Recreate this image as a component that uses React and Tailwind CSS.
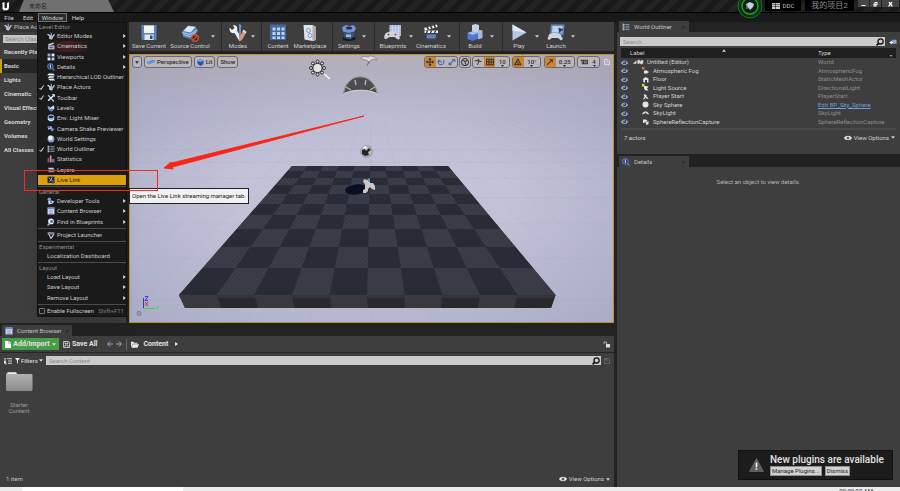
import React from "react";
import clsx from "clsx";

const icons = {
  tools: (
    <>
      <path d="M1 4l5 3-1 5" stroke="#dfe5ee" strokeWidth="2.4" fill="none" />
      <path d="M7 1l1 5-1 6" stroke="#7fa6dc" strokeWidth="2" fill="none" />
      <path d="M13 4l-6 8" stroke="#e3b796" strokeWidth="2.4" />
      <path d="M3 8h8l-2 5H6z" fill="#aebbd0" />
    </>
  ),
  clapper: (
    <>
      <path d="M2 4l9-3 1 2-9 3z" fill="#f0e4e6" />
      <rect x="2" y="6" width="11" height="7" fill="#b9bedb" />
      <rect x="4" y="8" width="7" height="3" fill="#5a6791" />
    </>
  ),
  panes: (
    <>
      <path d="M1 1h5v5H1z" fill="#8fb0dd" />
      <path d="M8 1h5v5H8z" fill="#e6eefb" />
      <path d="M1 8h5v5H1z" fill="#e6eefb" />
      <path d="M8 8h5v5H8z" fill="#b9cfee" />
    </>
  ),
  lens: (
    <>
      <circle cx="6" cy="6" r="5" fill="#27406f" stroke="#6d92cf" strokeWidth="1.4" />
      <path d="M6 4v5M5 5h1M6 2v1" stroke="#dce6f5" strokeWidth="1.6" />
      <path d="M10 10l3 3" stroke="#5b89d4" strokeWidth="2.4" />
    </>
  ),
  stack: (
    <>
      <path d="M3 1h8l3 3H0z" fill="#f1f1f1" />
      <path d="M4 5h9l-2 4H1z" fill="#c2c5c9" />
      <path d="M2 10h10l2 3H5z" fill="#ededed" />
    </>
  ),
  wrench: (
    <>
      <path d="M2 2l10 11" stroke="#a6c6ec" strokeWidth="2.4" />
      <path d="M12 2L2 12" stroke="#f4f6f8" strokeWidth="2.4" />
      <path d="M9 1h4v4" stroke="#f4f6f8" strokeWidth="1.5" fill="none" />
    </>
  ),
  levels: (
    <>
      <path d="M1 3l4 2 2 6-5-2z" fill="#78a2e0" />
      <path d="M6 6l6-4 1 6-5 5-4-2z" fill="#cfe0fa" />
      <path d="M4 10l5-2 3 1-4 4z" fill="#4b78c0" />
    </>
  ),
  globe: (
    <>
      <circle cx="7" cy="7" r="6" fill="#7aaddb" />
      <ellipse cx="7" cy="5" rx="5" ry="3" fill="#17222f" stroke="#d6e7f7" />
      <path d="M2 9c3 3 7 3 10 0" stroke="#e2f2ff" strokeWidth="2" fill="none" />
    </>
  ),
  shake: (
    <>
      <path d="M1 3l7-1 1 5-7 1z" fill="#b7cdf1" />
      <path d="M8 5l5 2-4 5-2-3z" fill="#7089c7" />
      <circle cx="4" cy="4" r="2" fill="#4e6ba8" />
    </>
  ),
  sphere: (
    <>
      <circle cx="7" cy="7" r="6" fill="#8aa1cf" />
      <circle cx="6" cy="5" r="4" fill="#eef2fb" />
    </>
  ),
  outliner: (
    <>
      <path d="M2 1v12M2 3h3M2 7h3M2 11h3" stroke="#e2e8f2" strokeWidth="1.3" />
      <path d="M6 2h7v2H6zM6 6h7v2H6zM6 10h7v2H6z" fill="#90a9cf" />
    </>
  ),
  bars: (
    <>
      <path d="M1 5h3v8H1z" fill="#b34a68" />
      <path d="M5 1h3v12H5z" fill="#d38b9d" />
      <path d="M9 7h4v6H9z" fill="#6c77b5" />
    </>
  ),
  layers: (
    <>
      <path d="M2 3h9l2 3H3z" fill="#c6d0e7" />
      <path d="M1 7h11l1 4H3z" fill="#7386b5" />
    </>
  ),
  live: (
    <>
      <rect x="1" y="1" width="12" height="11" fill="#1b2130" />
      <path d="M3 3l3 3M9 2l-2 5M4 9l4-2 4 4" stroke="#c7d4e6" strokeWidth="1.4" fill="none" />
      <path d="M8 8h5v5H8z" fill="#324e7b" />
    </>
  ),
  dev: (
    <>
      <circle cx="4" cy="4" r="3" fill="#7ea3da" />
      <path d="M2 7l6-1 5 2-4 4-6 1z" fill="#d4dded" />
      <circle cx="7" cy="9" r="1.5" fill="#33405a" />
    </>
  ),
  browser: (
    <>
      <rect x="1" y="1" width="12" height="12" fill="#d9e3fb" />
      <path d="M1 1h12v3H1zM3 6h8v2H3zM3 10h8v2H3z" fill="#6f87c6" />
    </>
  ),
  find: (
    <>
      <circle cx="7" cy="6" r="5" fill="#e7ecf5" />
      <circle cx="8" cy="6" r="2.6" fill="#4c6ea8" />
      <path d="M5 9l-4 4" stroke="#a1b8df" strokeWidth="2.4" />
    </>
  ),
  launcher: (
    <>
      <path d="M1 2h12v4H1z" fill="#7d8bb8" />
      <path d="M3 5l4 8 5-7" stroke="#c2cbe5" strokeWidth="2" fill="none" />
      <circle cx="4" cy="4" r="1.5" fill="#d6677a" />
    </>
  ),
  eye: (
    <>
      <path d="M0 8c3-7 11-7 14 0-3 5-11 5-14 0z" fill="#a9bbe6" />
      <circle cx="7" cy="7" r="3.6" fill="#27365f" />
      <circle cx="6" cy="6" r="1.5" fill="#e9efff" />
    </>
  ),
};

function Icon({ name, className = "size-2" }) {
  return (
    <svg viewBox="0 0 14 14" className={clsx("shrink-0", className)} aria-hidden="true">
      {icons[name]}
    </svg>
  );
}

function Caret({ className = "w-1 h-[3px]" }) {
  return (
    <svg viewBox="0 0 8 5" className={clsx("shrink-0 fill-current", className)} aria-hidden="true">
      <path d="M0 0h8L4 5z" />
    </svg>
  );
}

function SearchGlyph() {
  return (
    <svg viewBox="0 0 14 14" className="size-2 shrink-0" fill="none" stroke="#111" strokeWidth="2.2">
      <circle cx="8" cy="6" r="4.5" />
      <path d="M5 9l-4 4" strokeWidth="3" />
    </svg>
  );
}

function Tab({ icon, label }) {
  return (
    <div className="flex h-[11px] w-[70px] items-center gap-1 bg-[#3e3e3e] px-[3px] text-[#c4c4c4]">
      <Icon name={icon} />
      <span className="grow whitespace-nowrap">{label}</span>
      <button aria-label={"Close " + label} className="mr-px text-[6px] leading-none text-[#1c1c1c]">×</button>
    </div>
  );
}

function ViewOptions() {
  return (
    <button className="flex items-center gap-[2px] text-[#d0d0d0]">
      <svg viewBox="0 0 16 10" className="h-[6px] w-2">
        <path d="M0 5c4-6 12-6 16 0-4 6-12 6-16 0z" fill="#f0f0f0" />
        <circle cx="8" cy="5" r="3" fill="#50607c" />
      </svg>
      View Options
      <Caret />
    </button>
  );
}

/* ---------- title and menu bar ---------- */

function TitleBar() {
  return (
    <header className="relative flex h-3 shrink-0 items-start bg-[repeating-linear-gradient(135deg,#191919_0px,#191919_6px,#232323_6px,#232323_12px)]">
      <svg viewBox="0 0 20 20" className="ml-[1px] h-3 w-[10px]">
        <path d="M2 4c3-1 4-2 5-2v10c0 3 4 3 5 1V4l5-2c-1 1-1 2-1 3v8c0 3-2 5-5 6l-2-1-2 1c-3-1-4-3-4-5V6z" fill="#f5f5f5" />
      </svg>
      <div className="ml-2 flex h-3 w-[95px] items-center bg-[#707070] pl-[10px] [clip-path:polygon(5%_0,94%_0,100%_100%,0_100%)]">
        <span className="text-[6px] text-[#262626]">未命名</span>
      </div>
      <div className="grow" />
      <svg viewBox="0 0 28 22" className="mr-px h-[22px] w-7 self-start overflow-visible">
        <circle cx="14" cy="6" r="12" fill="#0e3c12" fillOpacity=".75" stroke="#1c6f22" strokeWidth="1" />
        <circle cx="14" cy="6" r="8" fill="#101d12" stroke="#22a32c" strokeWidth="1.4" />
        <path d="M10 4l4-2 4 2-1 3-3 3-3-4z" fill="#b8d5ee" />
        <path d="M11 4v5" stroke="#d3a15a" />
      </svg>
      <div className="mr-1 flex h-[11px] w-9 items-center justify-center gap-[3px] bg-black text-[#c5c5c5]">
        <svg viewBox="0 0 16 12" className="h-[6px] w-2" fill="#cfcfcf">
          <path d="M0 0h7v3H0zM8 0h8v3H8zM0 4h7v3H0zM8 4h8v3H8zM0 8h7v4H0zM8 8h8v4H8z" />
        </svg>
        DDC
      </div>
      <div className="mr-1 h-[11px] w-[49px] bg-black text-center text-[8px] leading-[11px] text-[#8f8f8f]">我的项目2</div>
      <div className="mr-px flex h-[7px] w-[41px] divide-x divide-[#222] bg-[#454545] text-white">
        {["M3 8h8v2H3z", "M5 2h6v6H9v3H3V5h2zM7 4v2h2V4zM5 7v2h2V7z", "M3 2h3l1 2 1-2h3L9 6l3 5H9L7 8l-2 3H2l3-5z"].map((d, i) => (
          <button key={d} aria-label={["Minimize", "Restore", "Close"][i]} className={clsx("flex items-center justify-center", i === 2 ? "grow" : "w-3")}>
            <svg viewBox="0 0 14 12" className="h-[6px] w-[7px] fill-current" fillRule="evenodd"><path d={d} /></svg>
          </button>
        ))}
      </div>
    </header>
  );
}

function MenuBar() {
  return (
    <nav className="flex h-[10px] shrink-0 items-center border-t border-black bg-[#191919] text-[#d4d4d4]">
      <button className="w-[18px]">File</button>
      <button className="w-5">Edit</button>
      <button className="h-[9px] w-[29px] border border-[#777] bg-[#2a2a2a] leading-[7px]">Window</button>
      <button className="w-[22px]">Help</button>
    </nav>
  );
}

/* ---------- window menu ---------- */

const levelEditor = [
  { label: "Editor Modes", icon: "tools", sub: true },
  { label: "Cinematics", icon: "clapper", sub: true, glow: true },
  { label: "Viewports", icon: "panes", sub: true },
  { label: "Details", icon: "lens", sub: true },
  { label: "Hierarchical LOD Outliner", icon: "stack" },
  { label: "Place Actors", icon: "tools", checked: true },
  { label: "Toolbar", icon: "wrench", checked: true },
  { label: "Levels", icon: "levels" },
  { label: "Env. Light Mixer", icon: "globe" },
  { label: "Camera Shake Previewer", icon: "shake" },
  { label: "World Settings", icon: "sphere" },
  { label: "World Outliner", icon: "outliner", checked: true },
  { label: "Statistics", icon: "bars" },
  { label: "Layers", icon: "layers" },
  { label: "Live Link", icon: "live", active: true },
];

const general = [
  { label: "Developer Tools", icon: "dev", sub: true },
  { label: "Content Browser", icon: "browser", sub: true },
  { label: "Find in Blueprints", icon: "find", sub: true },
];

const layouts = [
  { label: "Load Layout", sub: true },
  { label: "Save Layout", sub: true },
  { label: "Remove Layout", sub: true },
];

function MenuItem({ label, icon, sub, checked, active, glow }) {
  return (
    <button
      role="menuitem"
      className={clsx(
        "flex w-full items-center text-left",
        active ? "bg-[#dda00d] text-[#2a1d00]" : "text-[#c9c9c9]",
        glow && "bg-[radial-gradient(circle_at_35%_50%,#4b2020_0px,#1a1a1a_22px)]"
      )}
    >
      <span className="w-[9px] shrink-0">
        {checked && (
          <svg viewBox="0 0 10 10" className="ml-px size-[5px]" fill="none" stroke="#eee" strokeWidth="2">
            <path d="M1 6l3 3 5-8" />
          </svg>
        )}
      </span>
      {icon && <Icon name={icon} className="mr-[2px] size-2" />}
      <span className="grow whitespace-nowrap">{label}</span>
      {sub && (
        <svg viewBox="0 0 4 6" className="h-1 w-[3px] shrink-0 fill-[#ddd]"><path d="M0 0l4 3-4 3z" /></svg>
      )}
    </button>
  );
}

function MenuGroup({ title, items, rows }) {
  return (
    <section>
      {title && <h3 className="h-2 pl-px leading-2 text-[#8e8e8e]">{title}</h3>}
      <div className={clsx("grid auto-rows-fr", rows)}>
        {items.map((item) => <MenuItem key={item.label} {...item} />)}
      </div>
    </section>
  );
}

function WindowMenu() {
  const rule = <hr className="my-px h-px border-0 bg-[#4c4c4c]" />;
  return (
    <div role="menu" className="absolute top-[22px] left-[37px] z-20 w-[90px] border border-[#101010] bg-[#1a1a1a] shadow-lg">
      <MenuGroup title="Level Editor" items={levelEditor} rows="h-[154px]" />
      {rule}
      <MenuGroup title="General" items={general} rows="h-[31px]" />
      {rule}
      <MenuGroup items={[{ label: "Project Launcher", icon: "launcher" }]} rows="h-[10px]" />
      {rule}
      <MenuGroup title="Experimental" items={[{ label: "Localization Dashboard" }]} rows="h-[10px]" />
      {rule}
      <MenuGroup title="Layout" items={layouts} rows="h-[31px]" />
      {rule}
      <label className="flex h-[10px] items-center text-[#c9c9c9]">
        <input type="checkbox" className="mr-[2px] ml-[1px] size-[6px] appearance-none rounded-[1px] border border-[#777]" />
        <span className="grow">Enable Fullscreen</span>
        <span className="pr-[2px] text-[#7d7d7d]">Shift+F11</span>
      </label>
    </div>
  );
}

/* ---------- place actors ---------- */

const categories = ["Recently Placed", "Basic", "Lights", "Cinematic", "Visual Effects", "Geometry", "Volumes", "All Classes"];

function PlaceActors() {
  return (
    <aside className="w-[126px] shrink-0 bg-[#3e3e3e]">
      <div className="flex h-[10px] items-center gap-[2px] bg-[#333] pl-1 text-[#c4c4c4]">
        <Icon name="tools" />
        Place Actors
      </div>
      <input aria-label="Search classes" placeholder="Search Classes" className="mx-[3px] mt-[3px] mb-[2px] block h-2 w-[118px] bg-[#c4c4c4] pl-[2px] text-[6px] placeholder:text-[#858585]" />
      {categories.map((c) => (
        <button
          key={c}
          className={clsx(
            "block h-[14px] w-full border-l-2 pl-[2px] text-left font-bold text-[#d2d2d2]",
            c === "Basic" ? "border-[#d39a12] bg-[#262626]" : "border-transparent"
          )}
        >
          {c}
        </button>
      ))}
    </aside>
  );
}

/* ---------- main toolbar ---------- */

const art = {
  save: (
    <>
      <path d="M3 3h30v30H5l-2-2z" fill="#5b82c0" />
      <path d="M8 4h20v15H8z" fill="#f1f5fb" />
      <path d="M9 22h18v11H9z" fill="#dfe5ee" />
      <path d="M20 24h5v7h-5z" fill="#304b7c" />
    </>
  ),
  source: (
    <>
      <path d="M1 17l13-13 15 2 5 9-15 16-14-4z" fill="#5a83bd" />
      <path d="M5 15l9-10 15 2-10 11z" fill="#dbe7f4" />
      <path d="M3 18l15 4 14-9M5 22l13 4 12-9" stroke="#b7cceb" strokeWidth="2" fill="none" />
      <circle cx="28" cy="29" r="6.5" fill="#3c2420" stroke="#d5532d" strokeWidth="2.6" />
      <path d="M24 33l8-8" stroke="#d5532d" strokeWidth="2.6" />
    </>
  ),
  modes: (
    <>
      <path d="M1 8l5 5 5-4-3-6c8 0 10 6 8 11l9 15-5 5-9-15C5 21 0 16 1 8z" fill="#eef0f3" />
      <path d="M20 1c5 0 6 5 4 9v18h-4V12z" fill="#5f92cd" />
      <path d="M29 12l6 5-9 16-6 3v-6z" fill="#d79a74" />
      <path d="M29 12l6 5-2 3-6-4z" fill="#f1d5c2" />
    </>
  ),
  content: (
    <>
      <rect x="2" y="2" width="32" height="31" rx="2" fill="#46689f" />
      <path d="M7 8h6v6H7zM16 8h6v6h-6zM25 8h6v6h-6zM7 17h6v6H7zM16 17h6v6h-6zM25 17h6v6h-6zM7 26h6v5H7zM16 26h6v5h-6zM25 26h6v5h-6z" fill="#bcd3f4" />
    </>
  ),
  market: (
    <>
      <path d="M5 3h18l7 4v26l-7 2L7 32z" fill="#dfe4ec" />
      <path d="M23 3l7 4v26l-7 2z" fill="#b5a8a4" />
      <circle cx="15" cy="14" r="4" fill="none" stroke="#6b9bcf" strokeWidth="2" />
      <circle cx="18" cy="24" r="4" fill="none" stroke="#6b9bcf" strokeWidth="2" />
    </>
  ),
  settings: (
    <>
      <ellipse cx="18" cy="30" rx="13" ry="5" fill="#151515" />
      <path d="M4 8l7-5 8 2 8-2 5 6-3 7-11 3-12-3z" fill="#7194d6" />
      <ellipse cx="18" cy="9" rx="6" ry="3" fill="#26314a" />
      <path d="M8 18l10 2 10-2v8l-7 6-12-3z" fill="#3d5583" />
      <path d="M12 22h10v5H12z" fill="#a0b8e4" />
    </>
  ),
  blueprints: (
    <>
      <path d="M11 3h23v22H11z" fill="#a9b8e6" />
      <path d="M17 3v20M23 3v20M29 3v20M11 9h22M11 15h22" stroke="#e0e6fb" strokeWidth="1.2" />
      <path d="M3 20c4-5 20-5 25 0 4 4 5 11 1 12-4 0-6-5-8-5H12c-3 0-6 5-10 4-3-2-1-8 1-11z" fill="#d5d4d3" />
      <circle cx="9" cy="22" r="2" fill="#5a5a5a" />
      <circle cx="23" cy="22" r="2" fill="#5a5a5a" />
    </>
  ),
  cine: (
    <>
      <path d="M4 9l26-7 1 5L6 14z" fill="#f0f0f0" />
      <path d="M10 7l3 5M17 5l3 5M24 3l3 5" stroke="#333" strokeWidth="3" />
      <path d="M5 14h27v5H5z" fill="#ececec" />
      <path d="M11 14l-2 5M19 14l-2 5M27 14l-2 5" stroke="#333" strokeWidth="2.6" />
      <path d="M5 19h27l-2 15H7z" fill="#35435c" />
      <path d="M9 22h19l-1 8H10z" fill="#6b84ad" />
    </>
  ),
  build: (
    <>
      <path d="M12 3l7-2 7 2v24H12z" fill="#c6d2ea" />
      <path d="M24 12l9 2v15l-9 3z" fill="#a4b8de" />
      <path d="M3 19l9-3 12 3v11l-11 5-10-4z" fill="#4f78cc" />
      <path d="M3 19l9-3 12 3-11 4z" fill="#a0bff0" />
    </>
  ),
  play: (
    <>
      <path d="M5 2l28 16L5 34z" fill="#b5c6e6" />
      <path d="M5 2l28 16-28-3z" fill="#dbe6f7" />
    </>
  ),
  launch: (
    <>
      <path d="M8 2h27l-2 21H6z" fill="#6789b8" />
      <path d="M11 5h20l-1 13H10z" fill="#b8d3ee" />
      <path d="M23 8l10 4-9 7z" fill="#2e3a52" />
      <path d="M4 22c4-4 19-4 23 0l5 9-4 3-6-5H10l-6 4-3-2z" fill="#d0d3d9" />
    </>
  ),
};

const toolGroups = [
  [
    { label: "Save Current", art: "save", w: "w-[40px]" },
    { label: "Source Control", art: "source", w: "w-[42px]", arrow: "w-[10px]" },
  ],
  [{ label: "Modes", art: "modes", w: "w-[26px]", arrow: "w-[10px]", pad: "ml-[3px]" }],
  [
    { label: "Content", art: "content", w: "w-[32px]" },
    { label: "Marketplace", art: "market", w: "w-[32px]", pad: "mr-[6px]" },
  ],
  [{ label: "Settings", art: "settings", w: "w-[26px]", arrow: "w-[12px]", pad: "ml-[3px]" }],
  [
    { label: "Blueprints", art: "blueprints", w: "w-[32px]", arrow: "w-[6px]", pad: "ml-[2px]" },
    { label: "Cinematics", art: "cine", w: "w-[32px]", arrow: "w-[12px]" },
  ],
  [{ label: "Build", art: "build", w: "w-[30px]", arrow: "w-[12px]" }],
  [
    { label: "Play", art: "play", w: "w-[32px]", arrow: "w-[6px]" },
    { label: "Launch", art: "launch", w: "w-[30px]", arrow: "w-[12px]" },
  ],
];

function Toolbar() {
  return (
    <div className="flex h-[29px] bg-[#3e3e3e] text-[#cfcfcf]">
      {toolGroups.map((group, i) => (
        <div key={i} className={clsx("flex", i < toolGroups.length - 1 && "border-r border-[#282828]")}>
          {group.map((t) => (
            <div key={t.label} className={clsx("flex", t.pad)}>
              <button className={clsx("flex flex-col items-center whitespace-nowrap", t.w)}>
                <svg viewBox="0 0 36 36" className="mt-px h-[19px] w-[18px] shrink-0">{art[t.art]}</svg>
                <span className="leading-2">{t.label}</span>
              </button>
              {t.arrow && (
                <button aria-label={t.label + " options"} className={clsx("flex items-center", t.arrow)}><Caret /></button>
              )}
            </div>
          ))}
        </div>
      ))}
    </div>
  );
}

/* ---------- viewport ---------- */

const rowEdges = [166, 171, 178, 185, 194, 204, 215, 229, 247, 268, 295];

function edgeX(col, y) {
  const t = (y - 166) / 129;
  const left = 292 - 113 * t;
  const right = 448 + 107.5 * t;
  return left + ((right - left) * col) / 10;
}

function Floor() {
  const tiles = [];
  for (let r = 0; r < 10; r++) {
    for (let c = 0; c < 10; c++) {
      const y0 = rowEdges[r];
      const y1 = rowEdges[r + 1];
      const light = (r + c) % 2 === 0;
      const points = `${edgeX(c, y0)},${y0} ${edgeX(c + 1, y0)},${y0} ${edgeX(c + 1, y1)},${y1} ${edgeX(c, y1)},${y1}`;
      tiles.push(<polygon key={r + "-" + c} points={points} fill={light ? "url(#weave)" : "#292b36"} />);
    }
  }
  const front = [];
  for (let c = 0; c < 10; c++) {
    const a = 179 + c * 37.65;
    const b = 185 + c * 36.6;
    front.push(
      <polygon key={c} points={`${a},295 ${a + 37.65},295 ${b + 36.6},308 ${b},308`} fill={c % 2 ? "#29292c" : "#39393c"} />
    );
  }
  return (
    <g>
      <polygon points="292,166 448,166 555.5,295 551,308 185,308 179,295" fill="#2b2d37" />
      {tiles}
      {front}
      <path d="M179 295h376.5l-1 3H180z" fill="#3b3c42" fillOpacity=".6" />
    </g>
  );
}

function Scene() {
  const rays = [];
  for (let i = -24; i <= 24; i++) rays.push(<path key={i} d={`M${371 + i * 12} 116L${371 + i * 62} 323`} />);
  return (
    <svg viewBox="130 55 483 267" preserveAspectRatio="xMidYMid slice" className="absolute inset-0 size-full">
      <defs>
        <linearGradient id="sky" x1="0" y1="0" x2="0" y2="1">
          <stop offset="0" stopColor="#c2bbbf" />
          <stop offset=".06" stopColor="#bcb8c2" />
          <stop offset=".16" stopColor="#b9bacf" />
          <stop offset=".45" stopColor="#c2c3d8" />
          <stop offset="1" stopColor="#c0c1d8" />
        </linearGradient>
        <radialGradient id="vignette" cx=".5" cy=".52" r=".7">
          <stop offset=".4" stopColor="#8486a6" stopOpacity="0" />
          <stop offset="1" stopColor="#8486a6" stopOpacity=".38" />
        </radialGradient>
        <pattern id="weave" width="4" height="4" patternUnits="userSpaceOnUse">
          <rect width="4" height="4" fill="#3b3d49" />
          <path d="M0 0h2v2H0zM2 2h2v2H2z" fill="#373944" />
        </pattern>
      </defs>
      <rect x="130" y="55" width="483" height="267" fill="url(#sky)" />
      <g stroke="#a5a8c4" strokeWidth=".6" strokeOpacity=".25" fill="none">
        {rays}
        <path d="M130 150h483M130 162h483M130 178h483M130 198h483M130 224h483M130 258h483M130 300h483" />
      </g>
      <rect x="130" y="55" width="483" height="267" fill="url(#vignette)" />
      <Floor />

      {/* sun */}
      <g>
        <path d="M322 72l8 7" stroke="#f3f1f4" strokeWidth="1.6" />
        <g fill="#ddd" stroke="#2b2b2b" strokeWidth="1">
          {[0, 45, 90, 135, 180, 225, 270, 315].map((a) => (
            <circle key={a} cx={317.5 + 6.5 * Math.cos((a * Math.PI) / 180)} cy={68 + 6.5 * Math.sin((a * Math.PI) / 180)} r="1.5" />
          ))}
          <circle cx="317.5" cy="68" r="4.6" fill="#e7e4e2" />
        </g>
      </g>
      {/* sky light dome */}
      <path d="M343.500 94c2-23 31-23 34 0-8-5-26-5-34 0z" fill="#4c4c4e" stroke="#d6d6d8" strokeWidth="1.2" />
      <path d="M343.500 94c2-23 31-23 34 0" fill="none" stroke="#3c3c3e" strokeWidth=".5" />
      <path d="M346 87l5 3M355 80l1 5M366 80l-1 5M375 87l-5 3" stroke="#b9b9bb" strokeWidth="1.3" />
      {/* fog sprite */}
      <path d="M361 59c1-3 4-3 6-2l3-1c3 0 6 1 7 4l-4-1-3 2-1 3-1-3-3-1z" fill="#dcdadc" stroke="#77757a" strokeWidth=".7" />
      <path d="M369 61l-2 5" stroke="#77757a" strokeWidth="1" />
      {/* reflection capture */}
      <circle cx="366.500" cy="151.500" r="5.800" fill="#b9b9bc" stroke="#77777c" strokeWidth=".6" />
      <path d="M362 150l3-1 1 2 3-3 2 2-3 2 1 3-4 1-3-2z" fill="#242424" />
      <path d="M363 147l3-1 1 2-3 1z" fill="#fff" />
      {/* player start */}
      <ellipse cx="356" cy="189.500" rx="11" ry="5" fill="#0a0e22" transform="rotate(-8 356 189.500)" />
      <path d="M364 179l3 1 3-1v4h3l2 3v4l-3-1-2-2-2 2v2l-2 2h-3v-3l2-1v-5l-2-2z" fill="#c9c8c6" />
      <path d="M369 178v4" stroke="#4a8fc4" strokeWidth="1.5" />
      {/* axis gizmo */}
      <path d="M143.500 298v10" stroke="#3738b8" />
      <path d="M143 308.500h12" stroke="#3fd05a" />
      <path d="M145 296.500h3l-3 4h3" stroke="#3838ea" fill="none" />
      <path d="M145 302l3 4M148 302l-3 4" stroke="#e22e2e" />
      <path d="M156 306l1.500 2 1.500-2M157.500 308v2" stroke="#3fe05a" fill="none" />
      <circle cx="139" cy="313.500" r="2" fill="#9b9eb4" stroke="#6b6e84" strokeWidth=".8" />

      <path d="M364 116L171.500 163l-.5-1-7 6 9 1-.6-2z" fill="#fb2416" stroke="#fb2416" strokeWidth=".9" />
    </svg>
  );
}

const chip = "flex h-[12px] items-center overflow-hidden rounded-[3px] border border-[#6b696d] bg-[#b9b7bb] text-[#2c2c2c]";

function SnapValue({ children, w }) {
  return (
    <button className={clsx("flex h-full flex-col items-center justify-center font-medium leading-[7px]", w)}>
      {children}
      <Caret className="h-[2px] w-[3px]" />
    </button>
  );
}

function ToolGlyph({ d, on, w = "w-[11px]", color = "#333", label }) {
  return (
    <button aria-label={label} className={clsx("flex h-full items-center justify-center", w, on && "bg-[#ce8530]")}>
      <svg viewBox="0 0 14 14" className="size-2" fill="none" stroke={color} strokeWidth="1.8"><path d={d} /></svg>
    </button>
  );
}

function ViewportBar() {
  return (
    <div className="relative flex items-center px-[2px] pt-px">
      <div className="flex gap-[2px]">
        <button aria-label="Viewport options" className={clsx(chip, "w-[10px] justify-center")}><Caret /></button>
        <button className={clsx(chip, "gap-[2px] px-[2px] font-medium")}>
          <svg viewBox="0 0 16 10" className="h-[6px] w-2"><path d="M0 4l6-1 5-3 5 2v4l-6 1-5 3-5-2z" fill="#5e95df" /></svg>
          Perspective
        </button>
        <button className={clsx(chip, "gap-[2px] px-[2px] font-medium")}>
          <svg viewBox="0 0 14 14" className="size-[7px]"><path d="M7 0l6 3v7l-6 4-6-4V3z" fill="#2a55b8" /><path d="M7 0l6 3-6 3-6-3z" fill="#7ba3ea" /></svg>
          Lit
        </button>
        <button className={clsx(chip, "px-[2px] font-medium")}>Show</button>
      </div>
      <div className="grow" />
      <div className="flex items-center gap-px">
        <div className={clsx(chip, "w-[34px]")}>
          <ToolGlyph label="Move" on d="M7 1v12M1 7h12M5 3l2-2 2 2M5 11l2 2 2-2M3 5L1 7l2 2M11 5l2 2-2 2" />
          <ToolGlyph label="Rotate" color="#3f62a3" d="M3 3c-3 4 0 9 4 9s7-5 4-9M5 3v3H2M6 7h3" />
          <ToolGlyph label="Scale" color="#3f62a3" d="M2 12l9-9M7 3h5v4M2 8v4h4" />
        </div>
        <div className={clsx(chip, "w-[12px] justify-center")}>
          <ToolGlyph label="Coordinate space" d="M7 1a6 6 0 100 12A6 6 0 007 1M3 4l4 2 1 5M7 6l4-2" />
        </div>
        <div className={clsx(chip, "w-[38px]")}>
          <ToolGlyph label="Surface snapping" d="M1 5h8l-2-3M9 5L6 12M10 6h3" />
          <ToolGlyph label="Grid snapping" on w="w-[12px]" d="M1 2h12v10H1zM1 7h12M5 2v10M9 2v10" />
          <SnapValue w="w-[14px]">10</SnapValue>
        </div>
        <div className={clsx(chip, "ml-px w-[29px]")}>
          <ToolGlyph label="Rotation snapping" on d="M1 12L7 2l5 10zM8 12c0-3-2-4-4-5" />
          <SnapValue w="w-[17px]">10°</SnapValue>
        </div>
        <div className={clsx(chip, "ml-[2px] w-[31px]")}>
          <ToolGlyph label="Scale snapping" on d="M2 12l9-9M6 3h5v5" />
          <SnapValue w="w-[19px]">0.25</SnapValue>
        </div>
        <div className={clsx(chip, "ml-px w-[23px]")}>
          <ToolGlyph label="Camera speed" d="M1 4h4M2 7h3M3 10h2M6 4h7v6H6zM7 7h5" />
          <SnapValue w="w-[10px]">4</SnapValue>
        </div>
        <button aria-label="Maximize" className="ml-[2px] flex w-[8px] justify-center">
          <svg viewBox="0 0 10 10" className="size-[6px]" fill="none" stroke="#e8e8ec" strokeWidth="1.5"><path d="M1 1h5M1 1v8h8V3M4 6l4-4" /></svg>
        </button>
      </div>
    </div>
  );
}

function Viewport() {
  return (
    <section className="relative grow overflow-hidden border border-[#b98f2c] bg-[#bfc0d8]">
      <Scene />
      <ViewportBar />
    </section>
  );
}

/* ---------- content browser ---------- */

function ContentBrowser() {
  return (
    <section className="flex h-[163px] shrink-0 flex-col bg-[#3e3e3e]">
      <div className="flex h-3 items-end bg-[#222] pl-[2px]"><Tab icon="browser" label="Content Browser" /></div>
      <div className="flex h-[17px] items-center border-b border-[#262626] px-[2px] text-[7px] font-bold text-[#e3e3e3]">
        <button className="flex h-3 w-[57px] items-center justify-center gap-[2px] bg-[#479d49]">
          <svg viewBox="0 0 12 14" className="h-[7px] w-[6px]" fill="#fff"><path d="M0 0h7v5h5v9H0zM8 0l4 4H8z" /></svg>
          Add/Import
          <Caret />
        </button>
        <button className="ml-1 flex items-center gap-[2px]">
          <svg viewBox="0 0 14 14" className="size-[7px]" fill="none" stroke="#d8d8d8" strokeWidth="1.6"><path d="M1 1h10l2 2v10H1zM4 1v4h6V1M4 13V8h6v5" /></svg>
          Save All
        </button>
        <div className="ml-[10px] flex h-[11px] items-center gap-[3px] border-r border-[#666] pr-1">
          <button aria-label="Back"><svg viewBox="0 0 12 12" className="size-[6px]" fill="none" stroke="#a8a8a8" strokeWidth="2"><path d="M12 6H2M6 1L1 6l5 5" /></svg></button>
          <button aria-label="Forward"><svg viewBox="0 0 12 12" className="size-[6px]" fill="none" stroke="#a8a8a8" strokeWidth="2"><path d="M0 6h10M6 1l5 5-5 5" /></svg></button>
        </div>
        <button className="ml-1 flex items-center gap-1">
          <svg viewBox="0 0 16 13" className="h-[7px] w-2" fill="#eee"><path d="M0 12V1h5l1 2h7v2H4zM4 6h12l-3 7H1z" /></svg>
          Content
        </button>
        <svg viewBox="0 0 4 6" className="ml-[7px] h-1 w-[3px] fill-white"><path d="M0 0l4 3-4 3z" /></svg>
        <div className="grow" />
        <button aria-label="Lock">
          <svg viewBox="0 0 14 14" className="mr-[2px] size-[7px]"><path d="M2 6V2h5v4" fill="none" stroke="#ccc" strokeWidth="1.6" /><path d="M6 6h8v7H6z" fill="#ddd" /></svg>
        </button>
      </div>
      <div className="flex items-center gap-[3px] px-1 pt-[3px] text-[#d6d6d6]">
        <button aria-label="Sources"><svg viewBox="0 0 14 14" className="size-2" stroke="#ddd" strokeWidth="1.6"><path d="M0 3h3M5 3h9M7 7h7M7 11h7M2 4v8h3" fill="none" /><path d="M0 6l4 3-4 3z" fill="#fff" stroke="none" /></svg></button>
        <button className="flex w-[28px] items-center gap-px font-medium">
          <svg viewBox="0 0 10 12" className="h-[6px] w-[5px] fill-[#eee]"><path d="M0 0h10L6 5v7L4 9V5z" /></svg>
          Filters
          <Caret />
        </button>
        <div className="flex h-[9px] grow items-center bg-[#cbcbcb] pr-px">
          <input aria-label="Search content" placeholder="Search Content" className="min-w-0 grow pl-[3px] text-[6px] outline-none placeholder:text-[#8b8b8b]" />
          <SearchGlyph />
        </div>
        <svg viewBox="0 0 14 14" className="size-[6px]" fill="none" stroke="#777" strokeWidth="1.6"><path d="M1 1h10l2 2v10H1zM4 1v4h6" /></svg>
      </div>
      <div className="grow">
        <button className="mt-[7px] flex w-[38px] flex-col items-center text-[#9a9a9a]">
          <svg viewBox="0 0 54 38" className="h-[19px] w-[27px]">
            <defs>
              <linearGradient id="folder" x1="0" y1="0" x2="0" y2="1">
                <stop offset="0" stopColor="#b5b5b5" />
                <stop offset="1" stopColor="#8b8b8b" />
              </linearGradient>
            </defs>
            <path d="M4 0h16l3 4h28l2 2v30l-2 2H2l-2-2V4z" fill="url(#folder)" />
            <path d="M4 1h15l2 3H3z" fill="#e9e9e9" />
          </svg>
          <span className="mt-[11px] leading-[6px]">Starter<br />Content</span>
        </button>
      </div>
      <div className="flex h-4 items-center justify-between px-[6px] pr-1 text-[#c4c4c4]">
        <span>1 item</span>
        <ViewOptions />
      </div>
    </section>
  );
}

/* ---------- right column ---------- */

const actors = [
  { label: "Atmospheric Fog", type: "AtmosphericFog", mark: "#e8732a", d: "M4 8l4-2 6 4-4 3H4z" },
  { label: "Floor", type: "StaticMeshActor", d: "M2 6l5-4 6 3v8h-3V8H6v5H3z" },
  { label: "Light Source", type: "DirectionalLight", mark: "#ecd53a", d: "M4 4h4l5 1-3 4 3 4H7L4 9z" },
  { label: "Player Start", type: "PlayerStart", d: "M3 2l6 2v3l4 4-3 1-3-3-3 4H2l3-6z" },
  { label: "Sky Sphere", type: "Edit BP_Sky_Sphere", link: true, d: "M7 1a6 6 0 100 12A6 6 0 007 1" },
  { label: "SkyLight", type: "SkyLight", d: "M0 9c2-8 12-8 14 0l-4-1-3-3-3 3z" },
  { label: "SphereReflectionCapture", type: "SphereReflectionCapture", d: "M2 3h6l3 2-5 4-4 1zM7 9l6-3v6l-4 2z" },
];

function EyeButton() {
  return <button aria-label="Toggle visibility" className="flex"><Icon name="eye" className="size-[7px]" /></button>;
}

function WorldOutliner() {
  return (
    <section className="flex h-[132px] shrink-0 flex-col bg-[#3e3e3e]">
      <div className="flex h-[10px] items-end bg-[#222] pl-[2px]"><Tab icon="outliner" label="World Outliner" /></div>
      <div className="flex h-[14px] items-end gap-1 px-[3px]">
        <div className="flex h-[9px] grow items-center bg-[#cbcbcb] pr-px">
          <input aria-label="Search" placeholder="Search..." className="min-w-0 grow pl-[3px] text-[6px] outline-none placeholder:text-[#8b8b8b]" />
          <SearchGlyph />
        </div>
        <button aria-label="New folder">
          <svg viewBox="0 0 18 14" className="h-2 w-[8px]"><path d="M7 2h10v9H7z" fill="#8da6dc" /><path d="M1 8h8M5 4v8" stroke="#fff" strokeWidth="2.4" /></svg>
        </button>
      </div>
      <div className="px-[4px] pt-[2px]">
        <table className="h-[78px] w-full border-collapse text-left">
          <thead>
            <tr className="h-[10px] bg-[#1f1f1f] text-[#d2d2d2]">
              <th className="w-[9px] p-0" aria-label="Visibility" />
              <th className="p-0 font-normal">
                <span className="flex justify-between">Label <Caret className="mr-[92px] h-[3px] w-[4px] rotate-180" /></span>
              </th>
              <th className="w-[78px] p-0 font-normal">
                <span className="flex items-end justify-between pr-[3px]">Type <Caret className="h-[2px] w-[4px] text-[#999]" /></span>
              </th>
            </tr>
          </thead>
          <tbody className="text-[#d2d2d2]">
            <tr>
              <td className="p-0"><EyeButton /></td>
              <td className="p-0">
                <span className="flex items-center gap-[2px] pl-[2px]">
                  <svg viewBox="0 0 26 14" className="h-[6px] w-[13px]"><path d="M8 3v8H0z" fill="#ddd" /><path d="M10 4l5-3 2 5 4-4 3 2v6l-4 3-4-3-5 2z" fill="#d9d9d9" /></svg>
                  Untitled (Editor)
                </span>
              </td>
              <td className="p-0 text-[#8e8e8e]">World</td>
            </tr>
            {actors.map((a) => (
              <tr key={a.label}>
                <td className="p-0"><EyeButton /></td>
                <td className="p-0">
                  <span className="flex items-center gap-1 pl-3">
                    <svg viewBox="0 0 14 14" className="size-[7px]"><path d={a.d} fill="#e4e4e4" />{a.mark && <rect width="5" height="5" fill={a.mark} />}</svg>
                    {a.label}
                  </span>
                </td>
                <td className="p-0 text-[#8e8e8e]">{a.link ? <a href="#edit" className="text-[#6d9fdc] underline">{a.type}</a> : a.type}</td>
              </tr>
            ))}
          </tbody>
        </table>
      </div>
      <div className="grow" />
      <div className="mx-1 flex h-[17px] items-center justify-between border-t-2 border-[#4a4a4a] pr-px pl-[3px] text-[#d2d2d2]">
        <span>7 actors</span>
        <ViewOptions />
      </div>
      <div className="h-[9px] shrink-0" />
    </section>
  );
}

function Details() {
  return (
    <section className="relative grow bg-[#3e3e3e]">
      <div className="flex h-[13px] items-end bg-[#222] pl-[2px]"><Tab icon="lens" label="Details" /></div>
      <p className="pt-[11px] text-center text-[#b5b5b5]">Select an object to view details.</p>
    </section>
  );
}

function PluginToast() {
  const btn = "h-[10px] border border-[#8f8f8f] bg-[#d2d2d2] px-px leading-2 text-[#1c1c1c]";
  return (
    <div role="alert" className="absolute right-[7px] bottom-[11px] z-10 flex h-[30px] w-[155px] items-center border border-[#111] bg-[#1c1c1c] pl-[10px]">
      <svg viewBox="0 0 28 26" className="mr-[6px] h-[14px] w-[15px]">
        <path d="M14 1l13 24H1z" fill="#5d5d5d" stroke="#858585" />
        <path d="M12.500 9h3v8h-3zM12.500 19h3v3h-3z" fill="#fff" />
      </svg>
      <div>
        <p className="text-[10px] leading-[11px] font-medium whitespace-nowrap text-[#e2e2e2]">New plugins are available</p>
        <div className="mt-px flex gap-[3px]">
          <button className={btn}>Manage Plugins...</button>
          <button className={btn}>Dismiss</button>
        </div>
      </div>
    </div>
  );
}

export default function App() {
  return (
    <div className="relative flex h-screen min-h-[480px] flex-col overflow-hidden bg-[#222] font-[Roboto,'Noto_Sans_CJK_SC',sans-serif] text-[6px] leading-2">
      <TitleBar />
      <MenuBar />
      <main className="flex min-h-0 grow">
        <div className="flex min-w-0 grow flex-col">
          <div className="flex min-h-0 grow gap-[3px] pb-px">
            <PlaceActors />
            <div className="flex min-w-0 grow flex-col gap-[3px]">
              <Toolbar />
              <Viewport />
            </div>
          </div>
          <ContentBrowser />
        </div>
        <div className="ml-[3px] flex w-[283px] shrink-0 flex-col">
          <WorldOutliner />
          <Details />
        </div>
      </main>
      <footer className="flex h-1 shrink-0 overflow-hidden bg-[#ececec]">
        <span className="ml-[22px] h-1 w-[161px] bg-white" />
        <span className="grow" />
        <span className="pr-[27px] text-[6px] leading-2 text-[#333]">00:00:00 AM</span>
      </footer>

      <WindowMenu />
      <div role="tooltip" className="absolute top-[188px] left-[129px] z-20 border border-[#222] bg-[#f1f1f1] px-[2px] py-[3px] leading-2 whitespace-nowrap text-[#222]">
        Open the Live Link streaming manager tab.
      </div>
      <div className="absolute top-[170px] left-[24px] z-30 h-[21px] w-[134px] border border-[#f22c20]" />
      <PluginToast />
    </div>
  );
}
